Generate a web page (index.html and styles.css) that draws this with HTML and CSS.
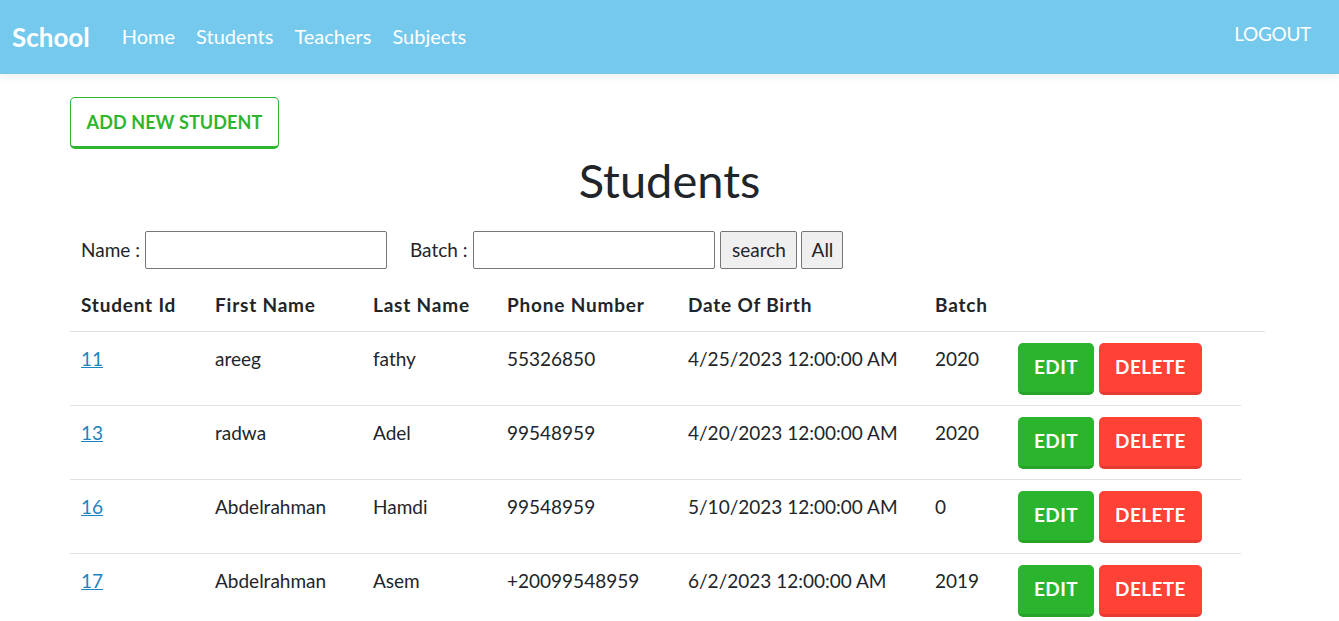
FILE: index.html
```html
<!DOCTYPE html>
<html lang="en">
<head>
<meta charset="utf-8">
<title>Students</title>
<link rel="stylesheet" href="styles.css">
</head>
<body>
<nav class="navbar">
  <div class="nav-left">
    <a class="brand" href="#">School</a>
    <a class="nav-link" href="#">Home</a>
    <a class="nav-link" href="#">Students</a>
    <a class="nav-link" href="#">Teachers</a>
    <a class="nav-link" href="#">Subjects</a>
  </div>
  <a class="logout" href="#">LOGOUT</a>
</nav>
<main class="container">
  <div class="top-row">
    <a class="btn-add" href="#">ADD NEW STUDENT</a>
  </div>
  <h1 class="title">Students</h1>
  <form class="search">
    <label class="lbl">Name :</label>
    <input class="field" type="text">
    <label class="lbl lbl-batch">Batch :</label>
    <input class="field" type="text">
    <button class="sbtn sbtn-search" type="button">search</button>
    <button class="sbtn sbtn-all" type="button">All</button>
  </form>
  <table class="table">
    <thead>
      <tr>
        <th class="c1">Student Id</th>
        <th class="c2">First Name</th>
        <th class="c3">Last Name</th>
        <th class="c4">Phone Number</th>
        <th class="c5">Date Of Birth</th>
        <th class="c6">Batch</th>
        <th class="c7"></th>
      </tr>
    </thead>
    <tbody>
      <tr>
        <td><a class="id" href="#">11</a></td>
        <td>areeg</td>
        <td>fathy</td>
        <td>55326850</td>
        <td>4/25/2023 12:00:00 AM</td>
        <td>2020</td>
        <td class="actions"><a class="btn edit" href="#">EDIT</a><a class="btn del" href="#">DELETE</a></td>
      </tr>
      <tr>
        <td><a class="id" href="#">13</a></td>
        <td>radwa</td>
        <td>Adel</td>
        <td>99548959</td>
        <td>4/20/2023 12:00:00 AM</td>
        <td>2020</td>
        <td class="actions"><a class="btn edit" href="#">EDIT</a><a class="btn del" href="#">DELETE</a></td>
      </tr>
      <tr>
        <td><a class="id" href="#">16</a></td>
        <td>Abdelrahman</td>
        <td>Hamdi</td>
        <td>99548959</td>
        <td>5/10/2023 12:00:00 AM</td>
        <td>0</td>
        <td class="actions"><a class="btn edit" href="#">EDIT</a><a class="btn del" href="#">DELETE</a></td>
      </tr>
      <tr>
        <td><a class="id" href="#">17</a></td>
        <td>Abdelrahman</td>
        <td>Asem</td>
        <td>+20099548959</td>
        <td>6/2/2023 12:00:00 AM</td>
        <td>2019</td>
        <td class="actions"><a class="btn edit" href="#">EDIT</a><a class="btn del" href="#">DELETE</a></td>
      </tr>
    </tbody>
  </table>
</main>
</body>
</html>
```
FILE: styles.css
```css
* { box-sizing: border-box; }
html, body { margin: 0; padding: 0; background: #fff; }
body {
  font-family: Lato, "Liberation Sans", sans-serif;
  color: #212529;
  font-size: 19px;
  line-height: 1.5;
}
a { text-decoration: none; }

.navbar {
  height: 74px;
  background: #74c9ed;
  display: flex;
  align-items: center;
  justify-content: space-between;
  padding: 0 28px 0 12px;
  box-shadow: 0 2px 8px rgba(0,0,0,0.08);
}
.nav-left { display: flex; align-items: center; gap: 21px; margin-top: -3px; }
.brand {
  color: #fff;
  font-weight: 700;
  font-size: 26px;
  margin-right: 11px;
  margin-top: 3px;
}
.nav-link { color: #fff; font-size: 20px; }
.logout { color: #fff; font-size: 19px; margin-top: -6px; letter-spacing: -0.3px; }

.container { width: 1199px; margin-left: 70px; }
.top-row { padding-top: 23px; }
.btn-add {
  display: inline-flex;
  align-items: center;
  height: 52px;
  width: 209px;
  justify-content: center;
  border: 1px solid #2db52f;
  border-bottom-width: 3px;
  border-radius: 5px;
  color: #2db52f;
  font-weight: 700;
  font-size: 18px;
  letter-spacing: 0.1px;
}
.title {
  margin: 0;
  text-align: center;
  font-weight: 400;
  font-size: 47px;
  line-height: 60px;
  padding-top: 1px;
  margin-bottom: -1px;
}
.search {
  display: flex;
  align-items: center;
  margin: 22px 0 0 11px;
  height: 38px;
}
.lbl { margin-right: 5px; }
.lbl-batch { margin-left: 23px; margin-right: 6px; }
.field {
  width: 242px;
  height: 38px;
  border: 1px solid #767676;
  border-radius: 2px;
  font: inherit;
}
.sbtn {
  height: 38px;
  padding: 0;
  background: #efefef;
  border: 1px solid #767676;
  border-radius: 2px;
  font: inherit;
  color: #212529;
}
.sbtn-search { width: 77px; margin-left: 5px; }
.sbtn-all { width: 42px; margin-left: 4px; }

.table {
  border-collapse: collapse;
  margin-top: 11px;
  width: 1195px;
}
.table th {
  text-align: left;
  font-weight: 700;
  padding: 11px 11px;
  border-bottom: 1px solid #dee2e6;
  letter-spacing: 0.8px;
  white-space: nowrap;
}
.c1 { width: 134px; }
.c2 { width: 158px; }
.c3 { width: 134px; }
.c4 { width: 181px; }
.c5 { width: 247px; }
.c6 { width: 83px; }
.table td {
  vertical-align: top;
  padding: 13px 11px 11px;
  border-bottom: 1px solid #dee2e6;
  white-space: nowrap;
}
.table tbody tr:last-child td { border-bottom: none; }
.table td.actions { padding: 11px 11px 10px; }
.id { color: #1c85c0; text-decoration: underline; }
.actions { display: flex; gap: 5px; width: 234px; }
.btn {
  display: inline-flex;
  align-items: center;
  justify-content: center;
  height: 52px;
  border-radius: 5px;
  color: #fff;
  font-weight: 700;
  font-size: 19px;
  letter-spacing: 0.4px;
  border-bottom: 3px solid;
}
.edit { width: 76px; background: #2bb52f; border-color: #27a32a; }
.del { width: 103px; background: #ff4136; border-color: #e53b31; }
```
